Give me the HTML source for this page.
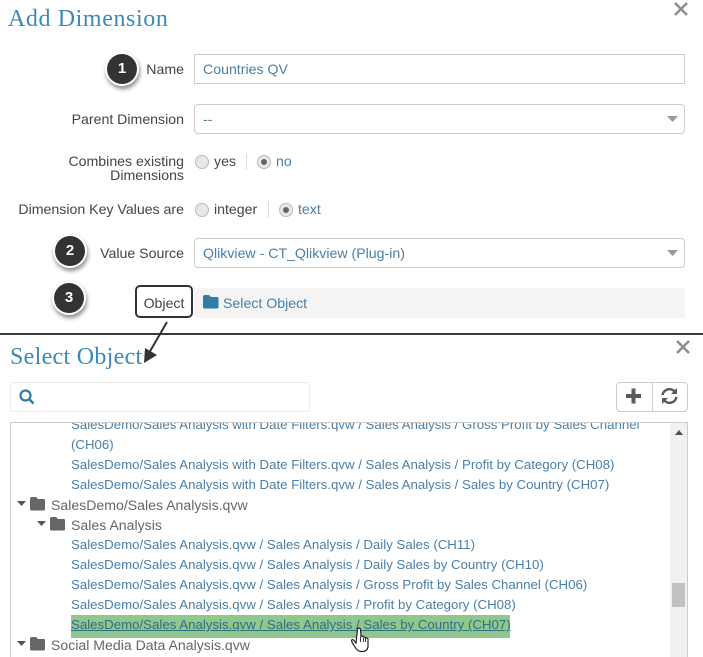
<!DOCTYPE html>
<html><head><meta charset="utf-8"><style>
html,body{margin:0;padding:0;background:#fff}
#p{position:relative;width:703px;height:657px;overflow:hidden;font-family:"Liberation Sans",sans-serif;font-size:14.15px;color:#444}
#p div,#p span.a{position:absolute;white-space:nowrap;line-height:20px}
.t{font-family:"Liberation Serif",serif;font-size:24px;color:#3b8ab5;line-height:30px!important;letter-spacing:.6px}
.l{text-align:right;right:519px;color:#444}
.box{box-sizing:border-box;left:194px;width:491px;height:30px;border:1px solid #ccc;background:#fff;border-radius:4px}
.v{color:#4a7fa8}
.b{box-sizing:border-box;width:30px;height:30px;border-radius:50%;background:#333;border:0;color:#fff;font-weight:bold;font-size:15px;text-align:center;line-height:30px!important;box-shadow:0 0 0 2px #fff,1px 3px 4px 2px rgba(0,0,0,.45)}
.r{box-sizing:border-box;width:14px;height:14px;border-radius:50%;border:1px solid #bbb;background:#e8e8e8}
.r.on::after{content:"";position:absolute;left:3px;top:3px;width:6px;height:6px;border-radius:50%;background:#666}
.sep{width:1px;height:16px;background:#ddd}
.i{left:71px;color:#4a7fa8;font-size:13.25px}
.f{color:#666;font-size:14.1px}
</style></head><body><div id="p">
<div class="t" style="left:8px;top:4px">Add Dimension</div>
<svg style="position:absolute;left:673px;top:1px" width="16" height="16"><path d="M2 2L14 14M14 2L2 14" stroke="#8a8f94" stroke-width="2.6"/></svg>

<div class="b" style="left:107px;top:54px">1</div>
<div class="l" style="top:59px">Name</div>
<div class="box" style="top:54px;border-radius:0"></div>
<div class="v" style="left:203px;top:59px">Countries QV</div>

<div class="l" style="top:109px">Parent Dimension</div>
<div class="box" style="top:104px"></div>
<div class="v" style="left:203px;top:109px">--</div>
<svg style="position:absolute;left:667px;top:116px" width="12" height="7"><path d="M0 0H11L5.500 6Z" fill="#999"/></svg>

<div class="l" style="top:154px;line-height:14px">Combines existing</div>
<div class="l" style="top:168px;line-height:14px">Dimensions</div>
<div class="r" style="left:195px;top:155px"></div>
<div style="left:214px;top:151px">yes</div>
<div class="sep" style="left:246px;top:154px"></div>
<div class="r on" style="left:257px;top:155px"></div>
<div class="v" style="left:276px;top:151px">no</div>

<div class="l" style="top:199px">Dimension Key Values are</div>
<div class="r" style="left:195px;top:203px"></div>
<div style="left:214px;top:199px">integer</div>
<div class="sep" style="left:268px;top:202px"></div>
<div class="r on" style="left:279px;top:203px"></div>
<div class="v" style="left:298px;top:199px">text</div>

<div class="b" style="left:55px;top:236px">2</div>
<div class="l" style="top:243px">Value Source</div>
<div class="box" style="top:238px"></div>
<div class="v" style="left:203px;top:243px">Qlikview - CT_Qlikview (Plug-in)</div>
<svg style="position:absolute;left:667px;top:250px" width="12" height="7"><path d="M0 0H11L5.500 6Z" fill="#999"/></svg>

<div class="b" style="left:54px;top:283px">3</div>
<div style="left:194px;top:288px;width:491px;height:30px;background:#f4f4f4"></div>
<div style="box-sizing:border-box;left:135px;top:285px;width:58px;height:33px;border:2px solid #333;border-radius:5px;background:#fff;text-align:center;line-height:33px;color:#444">Object</div>
<svg style="position:absolute;left:203px;top:295px" width="16" height="14"><path d="M0 2Q0 0 2 0H6L8 2H14Q15.500 2 15.500 3.500V12Q15.500 13.500 14 13.500H1.500Q0 13.500 0 12Z" fill="#2f7ea6"/></svg>
<div class="v" style="left:223px;top:293px">Select Object</div>

<div style="left:0;top:333px;width:703px;height:2px;background:#3c3c3c"></div>

<div class="t" style="left:10px;top:342px;letter-spacing:.3px">Select Object</div>
<svg style="position:absolute;left:140px;top:320px" width="30" height="45"><path d="M27 2L9 33" stroke="#333" stroke-width="2"/><path d="M4 43L5 28L17 35Z" fill="#333"/></svg>
<svg style="position:absolute;left:675px;top:339px" width="16" height="16"><path d="M2 2L14 14M14 2L2 14" stroke="#8a8f94" stroke-width="2.6"/></svg>

<div style="box-sizing:border-box;left:10px;top:382px;width:300px;height:30px;border:1px solid #eaeaea;border-radius:3px"></div>
<svg style="position:absolute;left:19px;top:389px" width="16" height="16"><circle cx="6.500" cy="6.500" r="5" fill="none" stroke="#2f7ea6" stroke-width="2.200"/><path d="M10 10L14.500 14.500" stroke="#2f7ea6" stroke-width="2.600"/></svg>

<div style="box-sizing:border-box;left:616px;top:382px;width:72px;height:30px;border:1px solid #ccc;border-radius:4px"></div>
<div style="left:652px;top:383px;width:1px;height:28px;background:#ccc"></div>
<svg style="position:absolute;left:625px;top:387px" width="18" height="18"><path d="M1 9H16M8.500 1.500V16.500" stroke="#5a5a5a" stroke-width="4"/></svg>
<svg style="position:absolute;left:660px;top:387px" width="19" height="18" fill="none" stroke="#5a5a5a" stroke-width="2.500"><path d="M2.500 8A7 7 0 0 1 15 5"/><path d="M16.500 10A7 7 0 0 1 4 13"/><path d="M17 1V7H11Z" fill="#5a5a5a" stroke="none"/><path d="M2 17V11H8Z" fill="#5a5a5a" stroke="none"/></svg>

<div style="box-sizing:border-box;left:10px;top:422px;width:678px;height:240px;border:1px solid #ccc;border-bottom:0;overflow:hidden">
  <div class="i" style="left:60px;top:-8px">SalesDemo/Sales Analysis with Date Filters.qvw / Sales Analysis / Gross Profit by Sales Channel</div>
  <div class="i" style="left:60px;top:12px">(CH06)</div>
  <div class="i" style="left:60px;top:32px">SalesDemo/Sales Analysis with Date Filters.qvw / Sales Analysis / Profit by Category (CH08)</div>
  <div class="i" style="left:60px;top:52px">SalesDemo/Sales Analysis with Date Filters.qvw / Sales Analysis / Sales by Country (CH07)</div>
  <div class="f" style="left:40px;top:72px">SalesDemo/Sales Analysis.qvw</div>
  <div class="f" style="left:60px;top:92px">Sales Analysis</div>
  <div class="i" style="left:60px;top:112px">SalesDemo/Sales Analysis.qvw / Sales Analysis / Daily Sales (CH11)</div>
  <div class="i" style="left:60px;top:132px">SalesDemo/Sales Analysis.qvw / Sales Analysis / Daily Sales by Country (CH10)</div>
  <div class="i" style="left:60px;top:152px">SalesDemo/Sales Analysis.qvw / Sales Analysis / Gross Profit by Sales Channel (CH06)</div>
  <div class="i" style="left:60px;top:172px">SalesDemo/Sales Analysis.qvw / Sales Analysis / Profit by Category (CH08)</div>
  <div style="left:60px;top:192px;width:439px;height:23px;background:#8fc78d"></div>
  <div style="left:60px;top:192px;color:#2f6f80;text-decoration:underline;font-size:13.25px">SalesDemo/Sales Analysis.qvw / Sales Analysis / Sales by Country (CH07)</div>
  <div class="f" style="left:40px;top:212px">Social Media Data Analysis.qvw</div>
  <svg style="position:absolute;left:6px;top:78px" width="12" height="8"><path d="M0 0H9L4.500 5Z" fill="#555"/></svg>
  <svg style="position:absolute;left:19px;top:74px" width="16" height="14"><path d="M0 2Q0 0 2 0H6L8 2H14Q15 2 15 3.500V12Q15 13.500 14 13.500H1.500Q0 13.500 0 12Z" fill="#666"/></svg>
  <svg style="position:absolute;left:26px;top:98px" width="12" height="8"><path d="M0 0H9L4.500 5Z" fill="#555"/></svg>
  <svg style="position:absolute;left:39px;top:94px" width="16" height="14"><path d="M0 2Q0 0 2 0H6L8 2H14Q15 2 15 3.500V12Q15 13.500 14 13.500H1.500Q0 13.500 0 12Z" fill="#666"/></svg>
  <svg style="position:absolute;left:6px;top:218px" width="12" height="8"><path d="M0 0H9L4.500 5Z" fill="#555"/></svg>
  <svg style="position:absolute;left:19px;top:214px" width="16" height="14"><path d="M0 2Q0 0 2 0H6L8 2H14Q15 2 15 3.500V12Q15 13.500 14 13.500H1.500Q0 13.500 0 12Z" fill="#666"/></svg>
  <div style="left:659px;top:0;width:17px;height:240px;background:#f1f1f1"></div>
  <svg style="position:absolute;left:664px;top:7px" width="10" height="6"><path d="M0 5H8L4 0Z" fill="#505050"/></svg>
  <div style="left:661px;top:160px;width:13px;height:24px;background:#c1c1c1"></div>
</div>

<svg style="position:absolute;left:350px;top:626px" width="22" height="28"><path d="M6 17L3.500 14Q2 13 1.500 14.500Q2 17 5 21Q7 25 11 25.500Q17 26 18 21V13Q17 11 15.500 12.500Q15 10.500 13.500 11Q12.500 9.500 11 10.500L10.500 3Q9 1 7.500 3Z" fill="#fff" stroke="#222" stroke-width="1.200"/><path d="M10.500 11V16M13.500 12V16M15.500 13V16" stroke="#222" stroke-width=".9"/></svg>
</div></body></html>
